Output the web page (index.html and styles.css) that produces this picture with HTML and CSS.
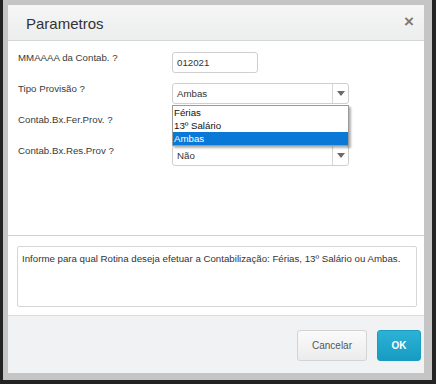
FILE: index.html
```
<!DOCTYPE html>
<html lang="pt">
<head>
    <meta charset="UTF-8">
    <title>Parametros</title>
    <link rel="stylesheet" href="styles.css">
</head>
<body>
    <div class="frame">
        <div class="dialog">
            <div class="dlg-header">
                <span class="dlg-title">Parametros</span>
                <span class="dlg-close">&times;</span>
            </div>

            <div class="dlg-body">
                <div class="row">
                    <label class="lbl">MMAAAA da Contab. ?</label>
                    <div class="field"><div class="txt short">012021</div></div>
                </div>
                <div class="row">
                    <label class="lbl">Tipo Provisão ?</label>
                    <div class="field">
                        <div class="sel"><span class="sel-val">Ambas</span><span class="sel-btn"><i class="arrow"></i></span></div>
                        <ul class="dropdown">
                            <li>Férias</li>
                            <li>13º Salário</li>
                            <li class="on">Ambas</li>
                        </ul>
                    </div>
                </div>
                <div class="row">
                    <label class="lbl">Contab.Bx.Fer.Prov. ?</label>
                    <div class="field">
                        <div class="sel"><span class="sel-val"></span><span class="sel-btn"><i class="arrow"></i></span></div>
                    </div>
                </div>
                <div class="row">
                    <label class="lbl">Contab.Bx.Res.Prov ?</label>
                    <div class="field">
                        <div class="sel"><span class="sel-val">Não</span><span class="sel-btn"><i class="arrow"></i></span></div>
                    </div>
                </div>
            </div>

            <div class="dlg-help">
                <div class="help-box">Informe para qual Rotina deseja efetuar a Contabilização: Férias, 13º Salário ou Ambas.</div>
            </div>

            <div class="dlg-footer">
                <button class="btn btn-cancel">Cancelar</button>
                <button class="btn btn-ok">OK</button>
            </div>
        </div>
    </div>
</body>
</html>
```

FILE: styles.css
```
html, body { margin: 0; padding: 0; }
body {
    background: #232323;
    font-family: "Liberation Sans", Arial, sans-serif;
    font-size: 9.7px;
    color: #333;
    width: 436px;
    height: 384px;
    overflow: hidden;
}

.frame {
    margin-left: 3px;
    width: 416px;
    height: 368px;
    border-style: solid;
    border-color: #c5c5c5;
    border-width: 5px 8px 7px 5px;
}
.dialog {
    height: 100%;
    display: flex;
    flex-direction: column;
    background: #fff;
}

.dlg-header {
    height: 35px;
    display: flex;
    align-items: center;
    justify-content: space-between;
    padding: 0 10px 0 18px;
    background: linear-gradient(#f6f6f7, #eceded);
    border-bottom: 1px solid #d6d6d6;
}
.dlg-title { font-size: 15px; color: #333; padding-top: 1px; }
.dlg-close { font-size: 17px; font-weight: bold; color: #7a7a7a; margin-top: -2px; }

.dlg-body {
    height: 183px;
    padding: 11px 0 0 10px;
    display: flex;
    flex-direction: column;
    gap: 10px;
    border-bottom: 1px solid #d0d0d0;
}
.row { display: flex; height: 21px; }
.lbl { width: 154px; color: #3a3a3a; line-height: 11px; }
.field { position: relative; width: 177px; }

.txt, .sel {
    box-sizing: border-box;
    height: 21px;
    border: 1px solid #cfcfcf;
    border-radius: 3px;
    background: #fff;
    display: flex;
    align-items: center;
}
.txt { padding-left: 4px; }
.txt.short { width: 86px; }
.sel { width: 177px; }
.sel-val { flex: 1; padding-left: 4px; }
.sel-btn {
    width: 15px;
    height: 100%;
    border-left: 1px solid #d6d6d6;
    display: flex;
    align-items: center;
    justify-content: center;
}
.arrow {
    width: 0;
    height: 0;
    border-left: 4px solid transparent;
    border-right: 4px solid transparent;
    border-top: 5px solid #6a6a6a;
}

.dropdown {
    position: absolute;
    top: 22px;
    left: 0;
    width: 175px;
    margin: 0;
    padding: 0;
    list-style: none;
    background: #fff;
    border: 1px solid #9a9a9a;
    box-shadow: 2px 2px 2px rgba(0, 0, 0, 0.3);
    z-index: 2;
}
.dropdown li { height: 13px; line-height: 13px; padding-left: 1px; color: #111; }
.dropdown li.on { background: #0a78d7; color: #fff; }

.dlg-help { height: 79px; padding: 10px 7px 0 9px; box-sizing: border-box; }
.help-box {
    height: 61px;
    box-sizing: border-box;
    border: 1px solid #d6d6d6;
    border-radius: 2px;
    padding: 6px 4px;
    line-height: 12px;
    white-space: nowrap;
}

.dlg-footer {
    flex: 1;
    display: flex;
    justify-content: flex-end;
    align-items: flex-start;
    gap: 10px;
    padding: 14px 3px 0 0;
    background: #f1f2f3;
    border-top: 1px solid #dcdcdc;
}
.btn {
    font-family: "Liberation Sans", Arial, sans-serif;
    font-size: 10px;
    height: 31px;
    border-radius: 3px;
    cursor: pointer;
}
.btn-cancel {
    width: 70px;
    color: #555;
    background: linear-gradient(#fafafa, #ececec);
    border: 1px solid #d3d3d3;
}
.btn-ok {
    width: 44px;
    color: #fff;
    font-weight: bold;
    background: linear-gradient(#2db2d6, #179bc2);
    border: 1px solid #1a9cc2;
}
```
